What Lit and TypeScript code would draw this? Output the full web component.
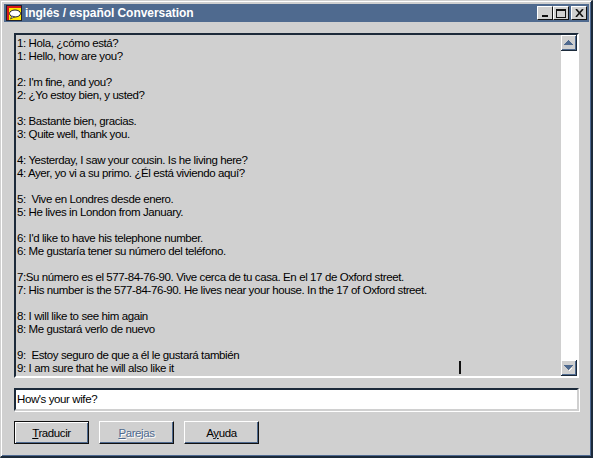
import { LitElement, html, css } from 'lit'
import { customElement } from 'lit/decorators.js'

const LINES = [
  '1: Hola, ¿cómo está?',
  '1: Hello, how are you?',
  '',
  "2: I'm fine, and you?",
  '2: ¿Yo estoy bien, y usted?',
  '',
  '3: Bastante bien, gracias.',
  '3: Quite well, thank you.',
  '',
  '4: Yesterday, I saw your cousin. Is he living here?',
  '4: Ayer, yo vi a su primo. ¿Él está viviendo aquí?',
  '',
  '5:  Vive en Londres desde enero.',
  '5: He lives in London from January.',
  '',
  "6: I'd like to have his telephone number.",
  '6: Me gustaría tener su número del teléfono.',
  '',
  '7:Su número es el 577-84-76-90. Vive cerca de tu casa. En el 17 de Oxford street.',
  '7: His number is the 577-84-76-90. He lives near your house. In the 17 of Oxford street.',
  '',
  '8: I will like to see him again',
  '8: Me gustará verlo de nuevo',
  '',
  '9:  Estoy seguro de que a él le gustará también',
  '9: I am sure that he will also like it',
]

@customElement('app-root')
export class AppRoot extends LitElement {
  static styles = css`
    :host {
      display: block;
      width: 593px;
      height: 458px;
      font-family: 'Liberation Sans', Arial, sans-serif;
      font-size: 11.5px;
      letter-spacing: -0.4px;
      color: #000;
    }

    .window {
      box-sizing: border-box;
      width: 593px;
      height: 458px;
      display: flex;
      flex-direction: column;
      background: #d0d0d0;
      border-top: 1px solid #d0d0d0;
      border-left: 1px solid #d0d0d0;
      border-right: 2px solid #1c2a3a;
      border-bottom: 2px solid #1c2a3a;
      box-shadow: inset 1px 1px 0 #fff, inset -1px -1px 0 #4f6a92;
      padding: 3px 2px 2px 3px;
    }

    .title {
      height: 18px;
      flex: none;
      display: flex;
      align-items: center;
      background: #4f6a8f;
      padding: 0 2px;
    }

    .title-text {
      margin-left: 3px;
      color: #fff;
      font-weight: bold;
      font-size: 12px;
      letter-spacing: -0.05px;
      white-space: nowrap;
      flex: 1;
    }

    .caption {
      width: 16px;
      height: 14px;
      box-sizing: border-box;
      background: #d0d0d0;
      border-top: 1px solid #fff;
      border-left: 1px solid #fff;
      border-right: 1px solid #111;
      border-bottom: 1px solid #111;
      display: flex;
      align-items: center;
      justify-content: center;
    }

    .caption.close {
      margin-left: 2px;
    }

    .log {
      margin: 11px 0 0 10px;
      width: 565px;
      height: 345px;
      flex: none;
      box-sizing: border-box;
      display: flex;
      border-top: 2px solid #1c2a3a;
      border-left: 2px solid #1c2a3a;
      border-right: 2px solid #fff;
      border-bottom: 2px solid #fff;
    }

    .log-text {
      flex: 1;
      overflow: hidden;
      padding: 2px 0 0 1px;
      line-height: 13px;
      white-space: pre;
      position: relative;
    }

    .cursor {
      position: absolute;
      left: 443px;
      top: 326px;
      width: 2px;
      height: 13px;
      background: #111;
    }

    .scroll {
      width: 16px;
      flex: none;
      display: flex;
      flex-direction: column;
      justify-content: space-between;
      background: #fff;
    }

    .arrow {
      width: 16px;
      height: 16px;
      box-sizing: border-box;
      background: #d0d0d0;
      border-right: 1px solid #1c2a3a;
      border-bottom: 1px solid #1c2a3a;
      box-shadow: inset 1px 1px 0 #fff, inset -1px -1px 0 #4f6a8f;
      display: flex;
      align-items: center;
      justify-content: center;
    }

    .input {
      margin: 10px 0 0 10px;
      width: 565px;
      height: 23px;
      flex: none;
      box-sizing: border-box;
      background: #fff;
      border-top: 2px solid #1c2a3a;
      border-left: 2px solid #1c2a3a;
      border-right: 2px solid #d0d0d0;
      border-bottom: 2px solid #d0d0d0;
      box-shadow: 1px 1px 0 #fff;
      padding: 2px 0 0 1px;
      line-height: 14px;
    }

    .buttons {
      display: flex;
      margin: 10px 0 0 10px;
      gap: 10px;
    }

    button {
      width: 75px;
      height: 23px;
      padding: 0;
      background: #d0d0d0;
      font: inherit;
      letter-spacing: inherit;
      color: #000;
      box-sizing: border-box;
      border-top: 1px solid #fff;
      border-left: 1px solid #fff;
      border-right: 1px solid #111;
      border-bottom: 1px solid #111;
      box-shadow: inset -1px -1px 0 #4f6a8f;
    }

    button.default {
      border: 1px solid #111;
      box-shadow: inset 1px 1px 0 #fff, inset -1px -1px 0 #4f6a8f;
    }

    button.off {
      color: #4f6a8f;
      text-shadow: 1px 1px 0 #fff;
    }

    u {
      text-underline-offset: 1px;
    }
  `

  render() {
    return html`
      <div class="window">
        <div class="title">
          <svg width="16" height="16" viewBox="0 0 16 16">
            <rect width="16" height="16" fill="#20202a" />
            <rect x="1" y="1" width="14" height="14" fill="#ffe800" />
            <path d="M1 1h14v2H3v12H1z" fill="#d81818" />
            <ellipse cx="9" cy="8.5" rx="5.5" ry="3.5" fill="#fff" stroke="#20202a" />
            <path d="M6 11l-1.5 3 4-2.2z" fill="#fff" stroke="#20202a" stroke-width="0.7" />
          </svg>
          <div class="title-text">inglés / español Conversation</div>
          <div class="caption">
            <svg width="8" height="8"><rect x="1" y="6" width="6" height="2" fill="#111" /></svg>
          </div>
          <div class="caption">
            <svg width="10" height="9"><rect x="0.5" y="1" width="9" height="7.5" fill="none" stroke="#111" /><rect y="0" width="10" height="2" fill="#111" /></svg>
          </div>
          <div class="caption close">
            <svg width="9" height="8"><path d="M1 0l7 8M8 0l-7 8" stroke="#111" stroke-width="1.6" /></svg>
          </div>
        </div>

        <div class="log">
          <div class="log-text">${LINES.map((l) => html`<div>${l || ' '}</div>`)}<span class="cursor"></span></div>
          <div class="scroll">
            <div class="arrow">
              <svg width="9" height="5"><path d="M4 0h1v1h1v1h1v1h1v1h1v1H0V4h1V3h1V2h1V1h1z" fill="#4f6a8f" /></svg>
            </div>
            <div class="arrow">
              <svg width="9" height="6">
                <path d="M0 0h9v1H8v1H7v1H6v1H5v1H4V4H3V3H2V2H1V1H0z" fill="#4f6a8f" />
                <path d="M5 5h1V4h1V3h1v1H7v1H6v1H5z" fill="#fff" />
              </svg>
            </div>
          </div>
        </div>

        <div class="input">How's your wife?</div>

        <div class="buttons">
          <button class="default"><u>T</u>raducir</button>
          <button class="off"><u>P</u>arejas</button>
          <button>A<u>y</u>uda</button>
        </div>
      </div>
    `
  }
}
